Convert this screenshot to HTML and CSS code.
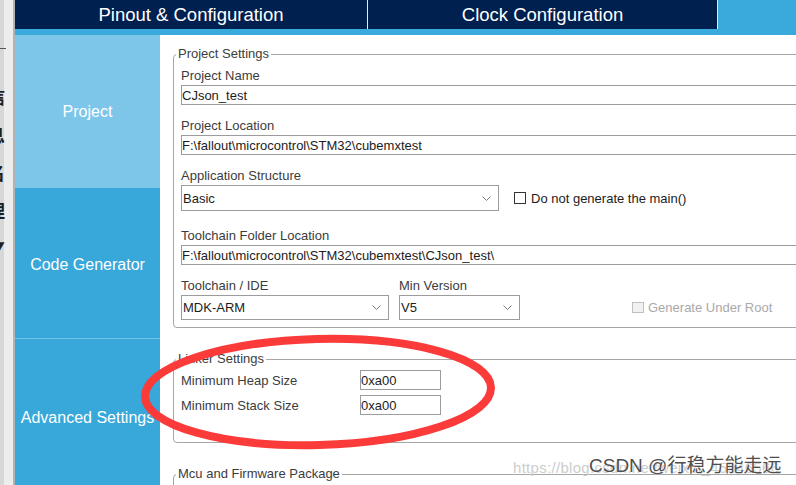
FILE: index.html
```html
<!DOCTYPE html>
<html lang="en">
<head>
<meta charset="utf-8">
<title>Project Manager</title>
<link rel="stylesheet" href="styles.css">
</head>
<body>
<div class="app">
  <div class="edge">
    <div class="edge-tick"></div>
    <div class="edge-glyphs">信<br>息<br>名<br>理<br>▼</div>
  </div>
  <div class="main">
    <div class="topbar">
      <div class="tab tab-pinout">Pinout &amp; Configuration</div>
      <div class="tab tab-clock">Clock Configuration</div>
      <div class="tab tab-active"></div>
    </div>
    <div class="strip"></div>
    <div class="body">
      <nav class="sidebar">
        <div class="nav nav-project">Project</div>
        <div class="nav nav-code">Code Generator</div>
        <div class="nav nav-adv">Advanced Settings</div>
      </nav>
      <div class="content">
        <fieldset class="group group-project">
          <legend>Project Settings</legend>
          <span class="label">Project Name</span>
          <div class="input">CJson_test</div>
          <span class="label">Project Location</span>
          <div class="input">F:\fallout\microcontrol\STM32\cubemxtest</div>
          <span class="label">Application Structure</span>
          <div class="row row-app">
            <div class="select select-app">Basic
              <svg class="chev" width="9" height="5" viewBox="0 0 9 5"><polyline points="0.5,0.5 4.5,4.5 8.5,0.5" fill="none" stroke="#7a7a7a" stroke-width="1"/></svg>
            </div>
            <div class="check"><span class="box"></span><span class="check-text">Do not generate the main()</span></div>
          </div>
          <span class="label">Toolchain Folder Location</span>
          <div class="input">F:\fallout\microcontrol\STM32\cubemxtest\CJson_test\</div>
          <div class="row row-tool">
            <div class="col-tool">
              <span class="label">Toolchain / IDE</span>
              <div class="select select-tool">MDK-ARM
                <svg class="chev" width="9" height="5" viewBox="0 0 9 5"><polyline points="0.5,0.5 4.5,4.5 8.5,0.5" fill="none" stroke="#7a7a7a" stroke-width="1"/></svg>
              </div>
            </div>
            <div class="col-ver">
              <span class="label">Min Version</span>
              <div class="select select-tool">V5
                <svg class="chev" width="9" height="5" viewBox="0 0 9 5"><polyline points="0.5,0.5 4.5,4.5 8.5,0.5" fill="none" stroke="#7a7a7a" stroke-width="1"/></svg>
              </div>
            </div>
            <div class="col-gen">
              <span class="box box-disabled"></span><span class="gen-text">Generate Under Root</span>
            </div>
          </div>
        </fieldset>

        <fieldset class="group group-linker">
          <legend>Linker Settings</legend>
          <div class="kv"><span class="label">Minimum Heap Size</span><div class="input input-small">0xa00</div></div>
          <div class="kv"><span class="label">Minimum Stack Size</span><div class="input input-small">0xa00</div></div>
        </fieldset>

        <fieldset class="group group-mcu">
          <legend>Mcu and Firmware Package</legend>
          <div class="mcu-space"></div>
        </fieldset>
      </div>
    </div>
  </div>

  <svg class="mark" width="796" height="485" viewBox="0 0 796 485">
    <ellipse cx="318" cy="392" rx="173" ry="53" transform="rotate(-1.5 318 392)" fill="none" stroke="#fb3a3a" stroke-width="8"/>
  </svg>
  <div class="wm-url">https://blog.csdn.net/weixin_45946566</div>
  <div class="wm-csdn">CSDN @行稳方能走远</div>
</div>
</body>
</html>
```

FILE: styles.css
```css
* { box-sizing: border-box; }

html, body { margin: 0; padding: 0; }

body {
  font-family: "Liberation Sans", Arial, sans-serif;
  background: #ffffff;
}

.app {
  position: relative;
  display: flex;
  width: 796px;
  height: 485px;
  overflow: hidden;
}

/* left window edge */
.edge {
  width: 15px;
  flex: none;
  background: linear-gradient(to right, #d7d7d7 0, #d7d7d7 4px, #ededed 4px, #ededed 100%);
  border-right: 2px solid #b3b3b3;
  overflow: hidden;
}
.edge-tick {
  margin-top: 48px;
  width: 6px;
  height: 1px;
  background: #555555;
}
.edge-glyphs {
  margin-top: 28px;
  margin-left: -13px;
  font: bold 18px/38px "Noto Sans CJK SC", sans-serif;
  color: #1e1e1e;
}

.main {
  flex: 1;
  min-width: 0;
  display: flex;
  flex-direction: column;
}

/* top tabs */
.topbar {
  height: 29px;
  flex: none;
  display: flex;
  background: #002050;
  color: #ffffff;
  font-size: 18.5px;
}
.tab {
  display: flex;
  align-items: center;
  justify-content: center;
  flex: none;
}
.tab-pinout { width: 353px; border-right: 1px solid #e6ecf3; }
.tab-clock { width: 350px; border-right: 1px solid #e6ecf3; }
.tab-active { flex: 1; background: #3aa9dc; }

.strip {
  height: 6px;
  flex: none;
  background: #3aa9dc;
}

.body {
  flex: 1;
  min-height: 0;
  display: flex;
}

/* sidebar */
.sidebar {
  width: 145px;
  flex: none;
  display: flex;
  flex-direction: column;
  color: #ffffff;
  font-size: 16px;
}
.nav {
  flex: none;
  display: flex;
  align-items: center;
  justify-content: center;
  white-space: nowrap;
}
.nav-project { height: 153px; background: #7dc6ea; }
.nav-code { height: 151px; padding-top: 3px; background: #38a7da; border-bottom: 1px solid #72c2e7; }
.nav-adv { height: 156px; padding-top: 2px; background: #38a7da; }

/* content */
.content {
  flex: 1;
  min-width: 0;
  overflow: hidden;
  padding-left: 13px;
  color: #3c3c3c;
  font-size: 13px;
}

.group {
  margin: 12px 0 0;
  width: 700px;
  min-width: 0;
  border: 1px solid #a6a6a6;
  border-radius: 4px;
  padding: 6px 7px 7px;
}
.group + .group { margin-top: 24px; }
.group legend {
  margin-left: -5px;
  padding: 0 2px;
  font-size: 13px;
  line-height: 14px;
  color: #3c3c3c;
}

.label {
  display: block;
  height: 16px;
  line-height: 18px;
  margin-bottom: 2px;
  white-space: nowrap;
}

.input {
  height: 20px;
  border: 1px solid #9c9c9c;
  line-height: 19px;
  padding: 0;
  color: #1c1c1c;
  margin-bottom: 12px;
  white-space: nowrap;
  overflow: hidden;
}

.row { display: flex; align-items: center; }
.row-app { margin-bottom: 16px; }
.row-tool { align-items: flex-start; }

.select {
  display: flex;
  align-items: center;
  border: 1px solid #9c9c9c;
  padding: 0 0 0 1px;
  color: #1c1c1c;
  white-space: nowrap;
}
.select .chev { margin-left: auto; margin-right: 7px; flex: none; }
.select-app { width: 318px; height: 26px; }
.select-tool { height: 25px; }

.check {
  display: flex;
  align-items: center;
  margin-left: 15px;
  color: #1c1c1c;
}
.box {
  display: block;
  width: 12px;
  height: 12px;
  flex: none;
  border: 1px solid #333333;
  background: #ffffff;
}
.check-text { margin-left: 5px; white-space: nowrap; }

.col-tool { width: 208px; flex: none; }
.col-ver { width: 121px; flex: none; margin-left: 10px; }
.col-gen {
  margin-left: 112px;
  margin-top: 18px;
  height: 25px;
  display: flex;
  align-items: center;
  white-space: nowrap;
}
.box-disabled {
  border-color: #c0c0c0;
  background: #f1f1f1;
  width: 12px;
  height: 11px;
}
.gen-text { margin-left: 4px; color: #a9a9a9; }

/* linker */
.group-linker { padding: 4px 7px 27px; }
.kv { display: flex; align-items: center; height: 20px; }
.kv + .kv { margin-top: 5px; }
.kv .label { width: 179px; margin: 0; flex: none; }
.input-small { width: 81px; margin: 0; flex: none; }

.mcu-space { height: 40px; }

/* overlays */
.mark {
  position: absolute;
  left: 0;
  top: 0;
  pointer-events: none;
}
.wm-url {
  position: absolute;
  left: 513px;
  top: 459px;
  font-size: 15px;
  letter-spacing: 0.3px;
  color: #cdcdcd;
  white-space: nowrap;
}
.wm-csdn {
  position: absolute;
  left: 589px;
  top: 454px;
  font-family: "Liberation Sans", "Noto Sans CJK SC", sans-serif;
  font-size: 19px;
  line-height: 24px;
  color: #4e4e4e;
  white-space: nowrap;
  text-shadow: 0 0 1px #ffffff;
}
```
